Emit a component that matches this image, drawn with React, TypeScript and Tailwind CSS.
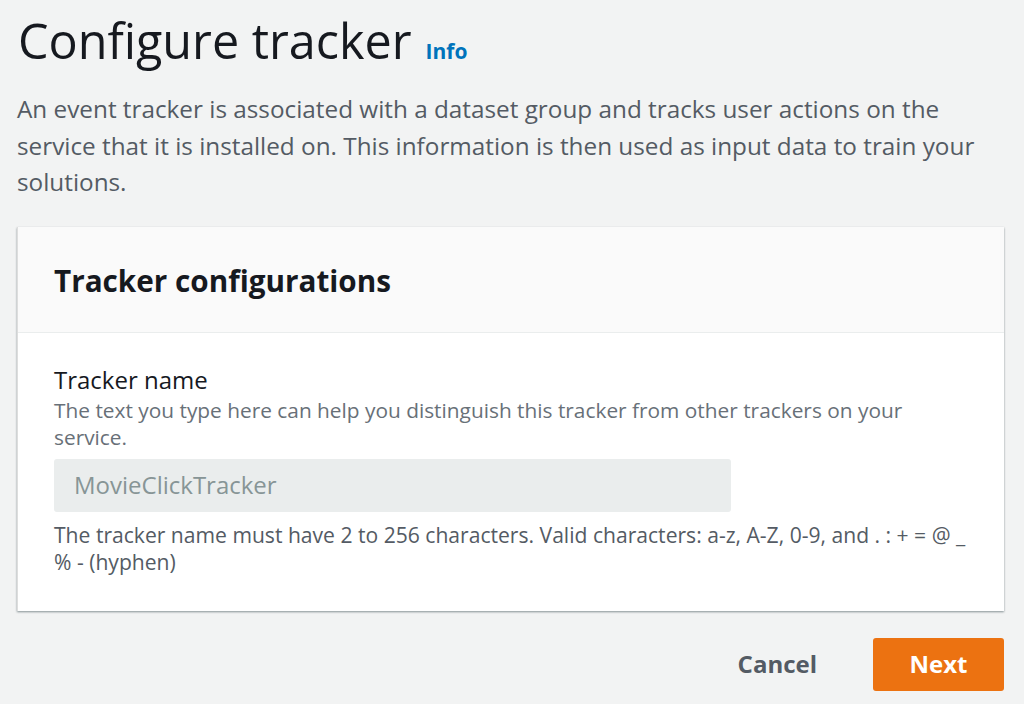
export default function App() {
  return (
    <div
      className="w-[1024px] h-[704px] overflow-hidden bg-[#f2f3f3] pl-[17px] pr-[20px] pt-[11px] text-[#16191f]"
      style={{ fontFamily: '"Open Sans", "Noto Sans", sans-serif' }}
    >
      <div className="flex items-baseline gap-[14px] pl-[1px]">
        <h1 className="text-[48.5px] leading-[58px] font-normal">Configure tracker</h1>
        <a className="text-[21px] font-bold text-[#0073bb]">Info</a>
      </div>

      <p className="mt-[22px] text-[24.3px] leading-[36.5px] text-[#545b64]">
        An event tracker is associated with a dataset group and tracks user actions on the
        service that it is installed on. This information is then used as input data to train your
        solutions.
      </p>

      <div className="mt-[26px] bg-white border-l border-[#dddddd] shadow-[0_1px_2px_rgba(0,28,36,0.45)]">
        <div className="h-[106px] flex items-center px-[36px] pt-[4px] bg-[#fafafa] border-b border-[#eaeded]">
          <h2 className="text-[29.7px] font-bold">Tracker configurations</h2>
        </div>

        <div className="pl-[36px] pr-[28px] pt-[30px] pb-[36px]">
          <label className="block text-[24px] leading-[34px]">Tracker name</label>
          <p className="text-[20.85px] leading-[27px] text-[#687078]">
            The text you type here can help you distinguish this tracker from other trackers on your
            service.
          </p>
          <div className="mt-[8px] w-[677px] h-[53px] rounded-[3px] bg-[#eaeded] flex items-center px-[20px]">
            <span className="text-[24px] text-[#879596]">MovieClickTracker</span>
          </div>
          <p className="mt-[9px] text-[21.1px] leading-[27px] text-[#545b64]">
            The tracker name must have 2 to 256 characters. Valid characters: a-z, A-Z, 0-9, and . : + = @ _
            % - (hyphen)
          </p>
        </div>
      </div>

      <div className="mt-[27px] flex items-center justify-end gap-[56px]">
        <button className="text-[24px] font-bold text-[#545b64]">Cancel</button>
        <button className="w-[131px] h-[53px] rounded-[3px] bg-[#ec7211] text-white text-[24px] font-bold">
          Next
        </button>
      </div>
    </div>
  );
}
